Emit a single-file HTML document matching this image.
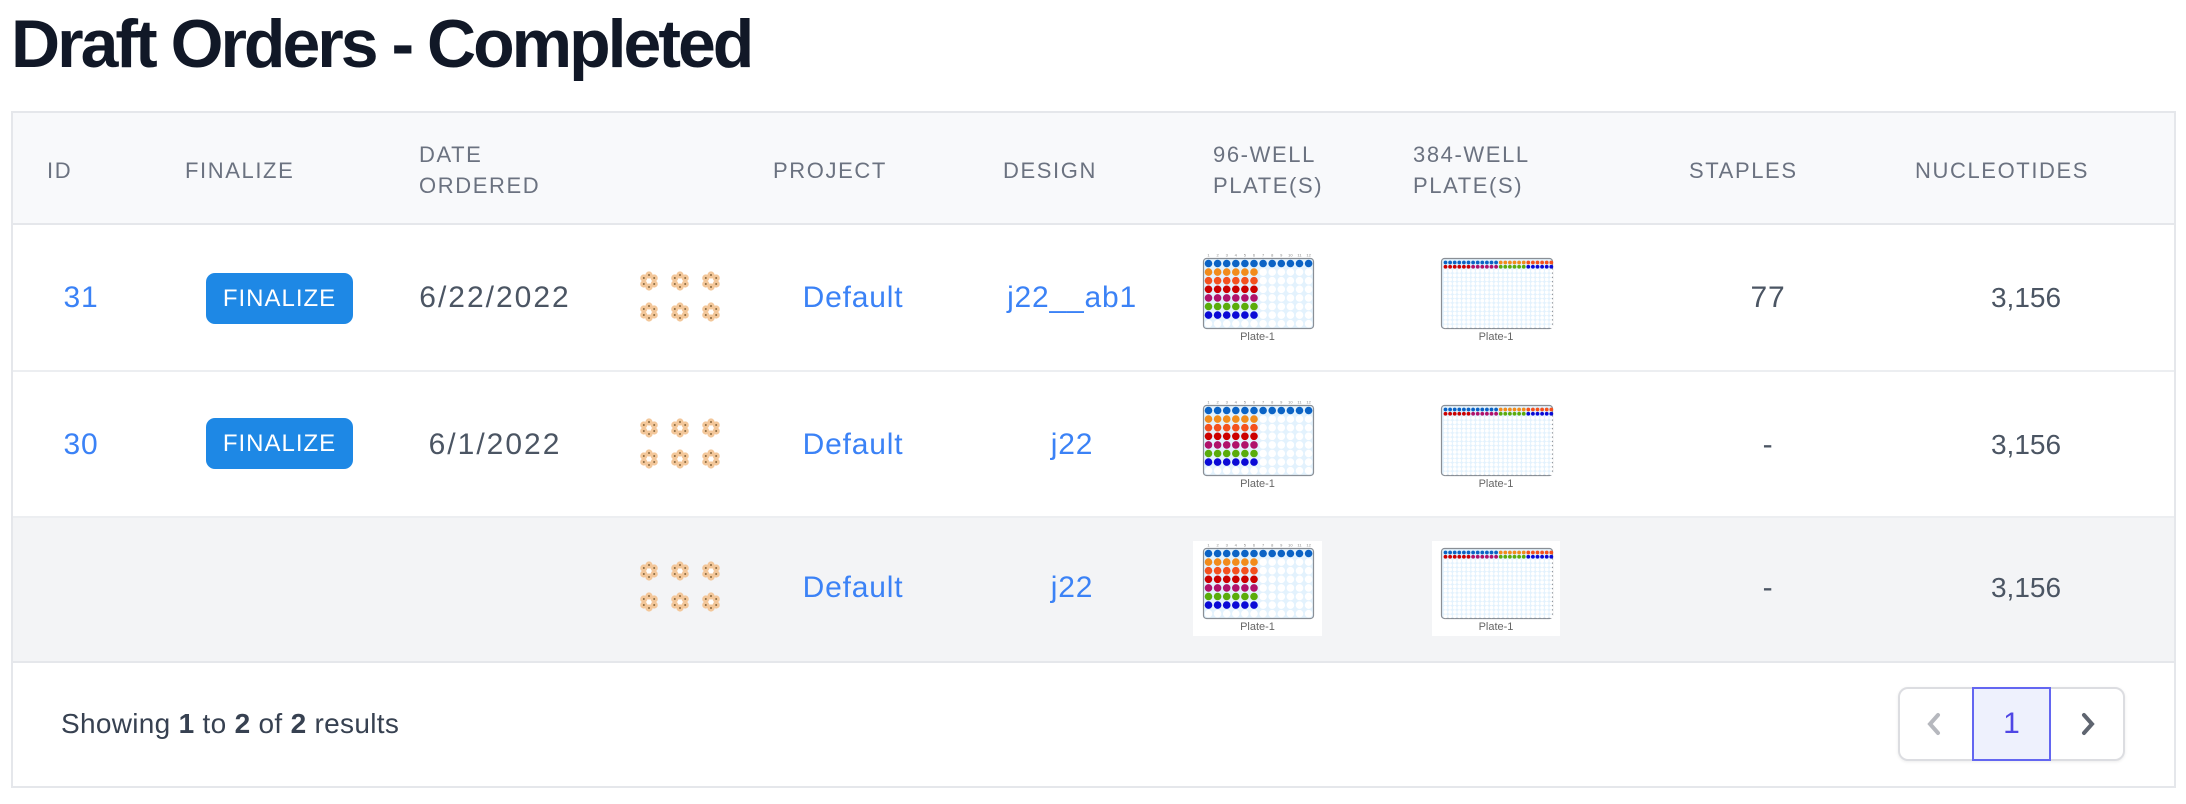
<!DOCTYPE html>
<html><head><meta charset="utf-8"><style>
*{margin:0;padding:0;box-sizing:border-box}
body{width:2186px;height:804px;background:#fff;font-family:"Liberation Sans",Arial,sans-serif;position:relative;overflow:hidden}
.a{position:absolute}
h1{position:absolute;left:11px;top:4px;font-size:68px;font-weight:bold;color:#111827;letter-spacing:-3px;line-height:80px}
.tbl{position:absolute;left:11px;top:111px;width:2165px;height:677px;border:2px solid #e5e7eb}
.hd{position:absolute;left:0;top:0;width:100%;height:112px;background:#f8f9fb;border-bottom:2px solid #e5e7eb}
.th{position:absolute;font-size:22px;letter-spacing:1.6px;color:#6b7280;line-height:31px}
.row{position:absolute;left:0;width:100%;border-bottom:2px solid #eceef1}
.c{position:absolute;transform:translate(-50%,-50%);font-size:30px;letter-spacing:0.8px;white-space:nowrap;color:#4b5563}
.l{color:#3b82f6}
.btn{position:absolute;width:147px;height:51px;background:#1e88e5;border-radius:9px;color:#fff;font-size:24px;letter-spacing:1px;text-align:center;line-height:51px}
.pl{position:absolute;background:#fff}
.pl .lb{position:absolute;left:0;width:100%;text-align:center;font-size:11px;color:#666}
</style></head><body>
<h1>Draft Orders - Completed</h1>
<div class="tbl">
 <div class="hd">
  <div class="th" style="left:34px;top:42px">ID</div>
  <div class="th" style="left:172px;top:42px">FINALIZE</div>
  <div class="th" style="left:406px;top:26px">DATE<br>ORDERED</div>
  <div class="th" style="left:760px;top:42px">PROJECT</div>
  <div class="th" style="left:990px;top:42px">DESIGN</div>
  <div class="th" style="left:1200px;top:26px">96-WELL<br>PLATE(S)</div>
  <div class="th" style="left:1400px;top:26px">384-WELL<br>PLATE(S)</div>
  <div class="th" style="left:1676px;top:42px">STAPLES</div>
  <div class="th" style="left:1902px;top:42px">NUCLEOTIDES</div>
 </div>
 <div class="row" style="top:112px;height:147px"></div>
 <div class="row" style="top:259px;height:146px"></div>
 <div class="row" style="top:405px;height:145px;background:#f3f4f6;border-bottom:2px solid #e5e7eb"></div>
</div>
<div id="cells"></div>
<div class="a" style="left:61px;top:708px;font-size:28px;letter-spacing:0.3px;color:#374151">Showing <b>1</b> to <b>2</b> of <b>2</b> results</div>
<div class="a" style="left:1898px;top:687px;width:227px;height:74px;border:2px solid #dcdde1;border-radius:10px;box-shadow:0 1px 3px rgba(0,0,0,.08)"></div>
<div class="a" style="left:1972px;top:687px;width:79px;height:74px;border:2px solid #6366f1;background:#eef1fd;color:#4f46e5;font-size:30px;text-align:center;line-height:70px">1</div>
<svg class="a" style="left:1922px;top:710px" width="24" height="28"><path d="M16 5 L8 14 L16 23" stroke="#b6b8be" stroke-width="4" fill="none" stroke-linecap="round"/></svg>
<svg class="a" style="left:2076px;top:710px" width="24" height="28"><path d="M8 5 L16 14 L8 23" stroke="#5f6570" stroke-width="4" fill="none" stroke-linecap="round"/></svg>
<script>
var C=document.getElementById('cells'),h='';
function flower(x,y){var s='<svg class="a" style="left:'+(x-11)+'px;top:'+(y-11)+'px" width="22" height="22">';for(var i=0;i<6;i++){var a=i*Math.PI/3-Math.PI/2;s+='<circle cx="'+(11+6*Math.cos(a))+'" cy="'+(11+6*Math.sin(a))+'" r="3.6" fill="#f3c79a"/>';}s+='<circle cx="11" cy="11" r="2.5" fill="#fff"/>';for(var i=0;i<6;i++){var a=i*Math.PI/3-Math.PI/2;s+='<circle cx="'+(11+6*Math.cos(a))+'" cy="'+(11+6*Math.sin(a))+'" r="1" fill="#8a6a40"/>';}return s+'</svg>';}
var cols96=['#0b63c5','#f28c1c','#f4511e','#cc0000','#b0126b','#5aac0b','#0a0ad6'];
function p96(x,y){var s='<div class="pl" style="left:'+x+'px;top:'+y+'px;width:129px;height:95px"><svg width="129" height="95" style="position:absolute;left:0;top:0"><rect x="10.5" y="7.5" width="110" height="70" rx="3" fill="#e3f2fd" stroke="#8a8f96" stroke-width="1.2"/>';
for(var c=0;c<12;c++)s+='<text x="'+(15.5+c*9.1)+'" y="5.5" font-size="4" fill="#888" text-anchor="middle" font-family="Liberation Sans">'+(c+1)+'</text>';
for(var r=0;r<8;r++){for(var c=0;c<12;c++){var f='#fff';if(r==0)f=cols96[0];else if(r<7&&c<6)f=cols96[r];s+='<circle cx="'+(15.5+c*9.1)+'" cy="'+(12.5+r*8.6)+'" r="3.8" fill="'+f+'"/>';}}
return s+'</svg><div class="lb" style="top:80px">Plate-1</div></div>';}
function p384(x,y){var s='<div class="pl" style="left:'+x+'px;top:'+y+'px;width:128px;height:95px"><svg width="128" height="95" style="position:absolute;left:0;top:0"><rect x="9.5" y="7.5" width="111" height="70" rx="3" fill="#e3f2fd" stroke="#8a8f96" stroke-width="1.2"/>';
for(var r=0;r<16;r++){for(var c=0;c<24;c++){var f='#fff';if(r==0)f=c<12?'#0b63c5':c<18?'#f28c1c':'#f4511e';if(r==1)f=c<6?'#cc0000':c<12?'#b0126b':c<18?'#5aac0b':'#0a0ad6';s+='<circle cx="'+(13.5+c*4.6)+'" cy="'+(11.5+r*4.25)+'" r="1.9" fill="'+f+'"/>';}}
return s+'</svg><div class="lb" style="top:80px">Plate-1</div></div>';}
var rows=[{y:298,id:'31',date:'6/22/2022',d:'j22__ab1',st:'77',btn:273},{y:445,id:'30',date:'6/1/2022',d:'j22',st:'-',btn:418},{y:588,id:'',date:'',d:'j22',st:'-'}];
rows.forEach(function(r){
 if(r.id)h+='<div class="c l" style="left:81px;top:'+r.y+'px">'+r.id+'</div>';
 if(r.btn)h+='<div class="btn" style="left:206px;top:'+r.btn+'px">FINALIZE</div>';
 if(r.date)h+='<div class="c" style="left:495px;top:'+r.y+'px;letter-spacing:2px">'+r.date+'</div>';
 [649,680,711].forEach(function(x){h+=flower(x,r.y-17)+flower(x,r.y+14);});
 h+='<div class="c l" style="left:853px;top:'+r.y+'px">Default</div>';
 h+='<div class="c l" style="left:1072px;top:'+r.y+'px">'+r.d+'</div>';
 h+=p96(1193,r.y-47)+p384(1432,r.y-47);
 h+='<div class="c" style="left:1768px;top:'+r.y+'px">'+r.st+'</div>';
 h+='<div class="c" style="left:2026px;top:'+r.y+'px;font-size:28px;letter-spacing:0">3,156</div>';
});
C.innerHTML=h;
</script>
</body></html>
